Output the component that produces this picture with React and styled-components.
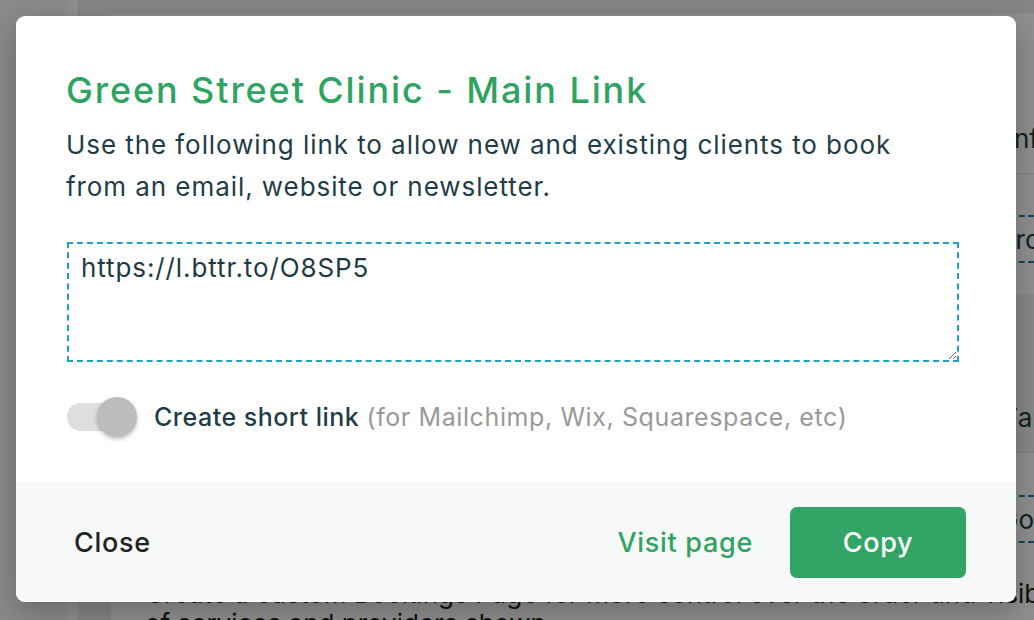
import React from "react";
import styled, { createGlobalStyle } from "styled-components";

const GlobalStyle = createGlobalStyle`
  html, body {
    margin: 0;
    padding: 0;
    background: #ffffff;
  }
  * {
    box-sizing: border-box;
  }
`;

const Screen = styled.div`
  position: relative;
  width: 1034px;
  height: 620px;
  overflow: hidden;
  font-family: Inter, "Noto Sans", "Liberation Sans", sans-serif;
  background: #f2f2f2;
`;

/* ---------- page behind the modal ---------- */

const Page = styled.div`
  display: flex;
  height: 100%;
`;

const Sidebar = styled.div`
  width: 67px;
  flex-shrink: 0;
  background: #f6f6f6;
`;

const Rail = styled.div`
  width: 11px;
  flex-shrink: 0;
  background: #ffffff;
`;

const Main = styled.div`
  flex: 1;
  padding: 14px 0 0 33px;
  background: #eeeeee;
  min-width: 0;
`;

const Card = styled.div`
  background: #ffffff;
  border-radius: 8px 0 0 0;
  height: 100%;
  display: flex;
  flex-direction: column;
`;

const Band = styled.div`
  height: ${(p) => p.h}px;
  flex-shrink: 0;
  background: ${(p) => (p.shade ? "#f1f2f2" : "#ffffff")};
  border-top: ${(p) => (p.line ? "1px solid #e6e6e6" : "none")};
  padding: ${(p) => p.top || 0}px 0 0 ${(p) => p.indent || 0}px;
`;

const BgText = styled.div`
  font-size: 26px;
  color: #1e3c46;
  white-space: nowrap;
  line-height: 32px;
`;

const BgField = styled.div`
  border-top: 2px dashed #1f7fa5;
  border-bottom: 2px dashed #1f7fa5;
  height: 48px;
  display: flex;
  align-items: center;
  font-size: 26px;
  color: #1e3c46;
  white-space: nowrap;
  padding-left: 8px;
`;

const BgParagraph = styled.div`
  font-size: 26px;
  line-height: 30px;
  color: #222;
  white-space: nowrap;
  padding: 4px 0 0 34px;
`;

/* ---------- modal ---------- */

const Overlay = styled.div`
  position: absolute;
  inset: 0;
  background: rgba(0, 0, 0, 0.44);
  padding: 16px 18px 18px 16px;
`;

const Modal = styled.div`
  width: 1000px;
  height: 586px;
  background: #ffffff;
  border-radius: 9px;
  overflow: hidden;
  display: flex;
  flex-direction: column;
  box-shadow: 0 10px 30px rgba(0, 0, 0, 0.25);
`;

const Body = styled.div`
  flex: 1;
  padding: 52px 50px 0 50px;
`;

const Title = styled.h2`
  margin: 0;
  font-size: 36px;
  line-height: 44px;
  font-weight: 500;
  color: #2fa462;
  letter-spacing: 1.9px;
`;

const Description = styled.p`
  margin: 12px 0 0 0;
  font-size: 26px;
  line-height: 42px;
  letter-spacing: 0.93px;
  color: #1f3d47;
  max-width: 860px;
`;

const LinkBox = styled.textarea`
  display: block;
  width: 892px;
  height: 120px;
  margin: 34px 0 0 1px;
  padding: 8px 12px;
  border: 2px dashed #1fa0c6;
  border-radius: 0;
  font-family: inherit;
  font-size: 26px;
  line-height: 32px;
  letter-spacing: 0.9px;
  color: #1f3a44;
  background: #ffffff;
  outline: none;
  resize: vertical;
`;

const ToggleRow = styled.label`
  display: flex;
  align-items: center;
  gap: 25px;
  margin: 35px 0 0 1px;
  height: 40px;
`;

const Track = styled.span`
  position: relative;
  display: inline-block;
  width: 62px;
  height: 28px;
  border-radius: 14px;
  background: #dedede;
  flex-shrink: 0;
`;

const Knob = styled.span`
  position: absolute;
  top: -6px;
  left: ${(p) => (p.on ? "2px" : "30px")};
  width: 40px;
  height: 40px;
  border-radius: 50%;
  background: #bdbdbd;
  box-shadow: 0 2px 4px rgba(0, 0, 0, 0.25);
`;

const ToggleLabel = styled.span`
  font-size: 25px;
  font-weight: 500;
  letter-spacing: 0.5px;
  color: #1f3d47;
  white-space: nowrap;
`;

const Hint = styled.span`
  font-weight: 400;
  letter-spacing: 0.6px;
  color: #999999;
`;

const Footer = styled.div`
  height: 120px;
  flex-shrink: 0;
  background: #f7f8f8;
  display: flex;
  align-items: center;
  padding: 0 50px 0 58px;
`;

const TextButton = styled.button`
  border: none;
  background: none;
  padding: 0;
  font-family: inherit;
  font-size: 27px;
  font-weight: 500;
  letter-spacing: 0.7px;
  color: ${(p) => p.color || "#222222"};
  cursor: pointer;
`;

const Spacer = styled.div`
  flex: 1;
`;

const PrimaryButton = styled.button`
  width: 176px;
  height: 71px;
  margin-left: 37px;
  border: none;
  border-radius: 7px;
  background: #32a566;
  color: #ffffff;
  font-family: inherit;
  font-size: 27px;
  font-weight: 500;
  letter-spacing: 0.7px;
  cursor: pointer;
`;

export default function App() {
  return (
    <>
      <GlobalStyle />
      <Screen>
        <Page>
          <Sidebar />
          <Rail />
          <Main>
            <Card>
              <Band h={159} top={109} indent={896}>
                <BgText>Info</BgText>
              </Band>
              <Band h={121} top={41} line indent={880}>
                <BgField>Proof</BgField>
              </Band>
              <Band h={158} top={108} shade indent={892}>
                <BgText>Fans</BgText>
              </Band>
              <Band h={123} top={42} line indent={880}>
                <BgField>Go</BgField>
              </Band>
              <BgParagraph>
                Create a custom Bookings Page for more control over the order and visibility
                <br />
                of services and providers shown.
              </BgParagraph>
            </Card>
          </Main>
        </Page>

        <Overlay>
          <Modal>
            <Body>
              <Title>Green Street Clinic - Main Link</Title>
              <Description>
                Use the following link to allow new and existing clients to book
                from an email, website or newsletter.
              </Description>
              <LinkBox readOnly value="https://l.bttr.to/O8SP5" />
              <ToggleRow>
                <Track>
                  <Knob />
                </Track>
                <ToggleLabel>
                  Create short link <Hint>(for Mailchimp, Wix, Squarespace, etc)</Hint>
                </ToggleLabel>
              </ToggleRow>
            </Body>
            <Footer>
              <TextButton>Close</TextButton>
              <Spacer />
              <TextButton color="#2fa462">Visit page</TextButton>
              <PrimaryButton>Copy</PrimaryButton>
            </Footer>
          </Modal>
        </Overlay>
      </Screen>
    </>
  );
}
